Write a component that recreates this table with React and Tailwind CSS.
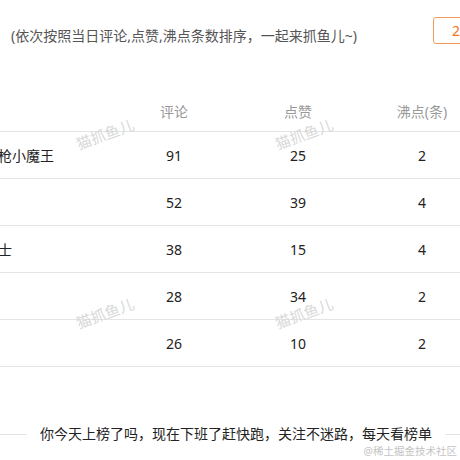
import React from 'react';

const ROWS = [
  { name: '枪小魔王', comments: 91, likes: 25, pins: 2 },
  { name: '', comments: 52, likes: 39, pins: 4 },
  { name: '士', comments: 38, likes: 15, pins: 4 },
  { name: '', comments: 28, likes: 34, pins: 2 },
  { name: '', comments: 26, likes: 10, pins: 2 },
];

const MARKS = [
  { left: 'left-[75px]', top: 'top-[125px]' },
  { left: 'left-[274px]', top: 'top-[125px]' },
  { left: 'left-[75px]', top: 'top-[304px]' },
  { left: 'left-[274px]', top: 'top-[304px]' },
];

export default function App() {
  return (
    <div
      className="relative w-[460px] h-[460px] overflow-hidden bg-white text-[#333]"
      style={{ fontFamily: '"Noto Sans", "Noto Sans CJK SC", sans-serif' }}
    >
      {/* Title bar */}
      <div className="flex items-start pt-[17px] pl-[11px]">
        <p className="mt-[9px] text-[14px] leading-[20px] text-[#555] whitespace-nowrap">
          (依次按照当日评论,点赞,沸点条数排序，一起来抓鱼儿~)
        </p>
        <div className="ml-auto -mr-[20px] flex h-[27px] w-[47px] shrink-0 items-center rounded-l-[3px] border border-[#f39a5a] pl-[18px] text-[14px] text-[#f5731e]">
          2
        </div>
      </div>

      {/* Ranking table */}
      <div className="mt-[45px] w-[484px]">
        <div className="grid h-[41px] grid-cols-[112px_124px_124px_124px] items-center border-b-[1.5px] border-[#e4e4e4] text-[14px] text-[#999]">
          <span></span>
          <span className="text-center">评论</span>
          <span className="text-center">点赞</span>
          <span className="text-center">沸点(条)</span>
        </div>
        {ROWS.map((row, i) => (
          <div
            key={i}
            className="grid h-[47px] grid-cols-[112px_124px_124px_124px] items-center border-b-[1.5px] border-[#e4e4e4] text-[14px] text-[#222]"
          >
            <span className="-ml-[2px] whitespace-nowrap">{row.name}</span>
            <span className="text-center">{row.comments}</span>
            <span className="text-center">{row.likes}</span>
            <span className="text-center">{row.pins}</span>
          </div>
        ))}
      </div>

      {/* Footer slogan */}
      <div className="mt-[57px] flex items-center">
        <span className="h-px w-[27px] bg-[#e3e3e3]"></span>
        <p className="mx-[13px] text-[14px] leading-[20px] text-[#222] whitespace-nowrap">
          你今天上榜了吗，现在下班了赶快跑，关注不迷路，每天看榜单
        </p>
        <span className="h-px flex-1 bg-[#e3e3e3]"></span>
      </div>
      <div className="flex justify-end pr-[3px]">
        <span className="text-[10.5px] leading-[14px] text-[#c4c4c4]">@稀土掘金技术社区</span>
      </div>

      {/* Watermarks */}
      {MARKS.map((m, i) => (
        <span
          key={i}
          className={`pointer-events-none absolute ${m.left} ${m.top} -rotate-[20deg] text-[15px] leading-[18px] text-[#d9d9d9] select-none`}
        >
          猫抓鱼儿
        </span>
      ))}
    </div>
  );
}
